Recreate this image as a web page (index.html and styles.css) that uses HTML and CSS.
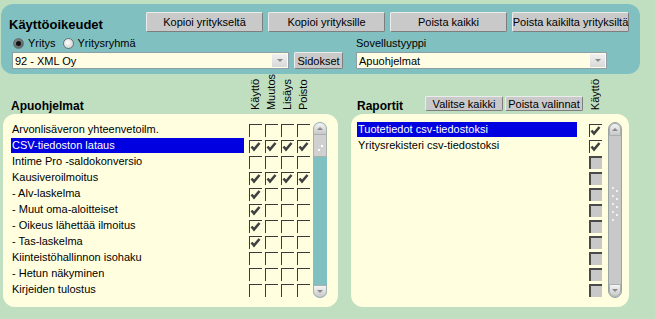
FILE: index.html
```html
<!DOCTYPE html>
<html>
<head>
<meta charset="utf-8">
<title>Käyttöoikeudet</title>
<link rel="stylesheet" href="styles.css">
</head>
<body>
<div class="top">
  <div class="row1">
    <div class="title">Käyttöoikeudet</div>
    <div class="btns">
      <div class="btn tb">Kopioi yritykseltä</div>
      <div class="btn tb">Kopioi yrityksille</div>
      <div class="btn tb">Poista kaikki</div>
      <div class="btn tb">Poista kaikilta yrityksiltä</div>
    </div>
  </div>
  <div class="grid">
    <div class="radios">
      <span class="radio"><span class="rb on"></span>Yritys</span>
      <span class="radio"><span class="rb"></span>Yritysryhmä</span>
    </div>
    <div class="lbl">Sovellustyyppi</div>
    <div class="select"><span class="val">92 - XML Oy</span><span class="arrow"><span class="tri-down"></span></span></div>
    <div class="btn sid">Sidokset</div>
    <div class="select s2"><span class="val">Apuohjelmat</span><span class="arrow"><span class="tri-down"></span></span></div>
  </div>
</div>

<div class="lower">
  <div class="col left">
    <div class="head">
      <div class="htitle">Apuohjelmat</div>
      <div class="vlabels">
        <span class="vl">Käyttö</span>
        <span class="vl">Muutos</span>
        <span class="vl">Lisäys</span>
        <span class="vl">Poisto</span>
      </div>
    </div>
    <div class="panel">
      <div class="list">
        <div class="row"><div class="name">Arvonlisäveron yhteenvetoilm.</div><span class="cell"><span class="cb"></span></span><span class="cell"><span class="cb"></span></span><span class="cell"><span class="cb"></span></span><span class="cell"><span class="cb"></span></span></div>
        <div class="row"><div class="name sel">CSV-tiedoston lataus</div><span class="cell"><span class="cb"><svg class="ck" viewBox="0 0 11 11"><path d="M1.5 5.5 L4 8.5 L9.5 2"/></svg></span></span><span class="cell"><span class="cb"><svg class="ck" viewBox="0 0 11 11"><path d="M1.5 5.5 L4 8.5 L9.5 2"/></svg></span></span><span class="cell"><span class="cb"><svg class="ck" viewBox="0 0 11 11"><path d="M1.5 5.5 L4 8.5 L9.5 2"/></svg></span></span><span class="cell"><span class="cb"><svg class="ck" viewBox="0 0 11 11"><path d="M1.5 5.5 L4 8.5 L9.5 2"/></svg></span></span></div>
        <div class="row"><div class="name">Intime Pro -saldokonversio</div><span class="cell"><span class="cb"></span></span><span class="cell"><span class="cb"></span></span><span class="cell"><span class="cb"></span></span><span class="cell"><span class="cb"></span></span></div>
        <div class="row"><div class="name">Kausiveroilmoitus</div><span class="cell"><span class="cb"><svg class="ck" viewBox="0 0 11 11"><path d="M1.5 5.5 L4 8.5 L9.5 2"/></svg></span></span><span class="cell"><span class="cb"><svg class="ck" viewBox="0 0 11 11"><path d="M1.5 5.5 L4 8.5 L9.5 2"/></svg></span></span><span class="cell"><span class="cb"><svg class="ck" viewBox="0 0 11 11"><path d="M1.5 5.5 L4 8.5 L9.5 2"/></svg></span></span><span class="cell"><span class="cb"><svg class="ck" viewBox="0 0 11 11"><path d="M1.5 5.5 L4 8.5 L9.5 2"/></svg></span></span></div>
        <div class="row"><div class="name">- Alv-laskelma</div><span class="cell"><span class="cb"><svg class="ck" viewBox="0 0 11 11"><path d="M1.5 5.5 L4 8.5 L9.5 2"/></svg></span></span><span class="cell"><span class="cb"></span></span><span class="cell"><span class="cb"></span></span><span class="cell"><span class="cb"></span></span></div>
        <div class="row"><div class="name">- Muut oma-aloitteiset</div><span class="cell"><span class="cb"><svg class="ck" viewBox="0 0 11 11"><path d="M1.5 5.5 L4 8.5 L9.5 2"/></svg></span></span><span class="cell"><span class="cb"></span></span><span class="cell"><span class="cb"></span></span><span class="cell"><span class="cb"></span></span></div>
        <div class="row"><div class="name">- Oikeus lähettää ilmoitus</div><span class="cell"><span class="cb"><svg class="ck" viewBox="0 0 11 11"><path d="M1.5 5.5 L4 8.5 L9.5 2"/></svg></span></span><span class="cell"><span class="cb"></span></span><span class="cell"><span class="cb"></span></span><span class="cell"><span class="cb"></span></span></div>
        <div class="row"><div class="name">- Tas-laskelma</div><span class="cell"><span class="cb"><svg class="ck" viewBox="0 0 11 11"><path d="M1.5 5.5 L4 8.5 L9.5 2"/></svg></span></span><span class="cell"><span class="cb"></span></span><span class="cell"><span class="cb"></span></span><span class="cell"><span class="cb"></span></span></div>
        <div class="row"><div class="name">Kiinteistöhallinnon isohaku</div><span class="cell"><span class="cb"></span></span><span class="cell"><span class="cb"></span></span><span class="cell"><span class="cb"></span></span><span class="cell"><span class="cb"></span></span></div>
        <div class="row"><div class="name">- Hetun näkyminen</div><span class="cell"><span class="cb"></span></span><span class="cell"><span class="cb"></span></span><span class="cell"><span class="cb"></span></span><span class="cell"><span class="cb"></span></span></div>
        <div class="row"><div class="name">Kirjeiden tulostus</div><span class="cell"><span class="cb"></span></span><span class="cell"><span class="cb"></span></span><span class="cell"><span class="cb"></span></span><span class="cell"><span class="cb"></span></span></div>
      </div>
      <div class="sb teal">
        <div class="cap up"><span class="tri-up"></span></div>
        <div class="thumb"><span class="dot"></span><span class="dot d2"></span></div>
        <div class="cap down"><span class="tri-down"></span></div>
      </div>
    </div>
  </div>

  <div class="col right">
    <div class="head">
      <div class="htitle rt">Raportit</div>
      <div class="hbtns">
        <div class="btn sm">Valitse kaikki</div>
        <div class="btn sm">Poista valinnat</div>
      </div>
      <div class="vlabels">
        <span class="vl">Käyttö</span>
      </div>
    </div>
    <div class="panel rp">
      <div class="list">
        <div class="row"><div class="name rn sel">Tuotetiedot csv-tiedostoksi</div><span class="cell"><span class="cb"><svg class="ck" viewBox="0 0 11 11"><path d="M1.5 5.5 L4 8.5 L9.5 2"/></svg></span></span></div>
        <div class="row"><div class="name rn">Yritysrekisteri csv-tiedostoksi</div><span class="cell"><span class="cb"><svg class="ck" viewBox="0 0 11 11"><path d="M1.5 5.5 L4 8.5 L9.5 2"/></svg></span></span></div>
        <div class="row"><div class="name rn"></div><span class="cell"><span class="cb dis"></span></span></div>
        <div class="row"><div class="name rn"></div><span class="cell"><span class="cb dis"></span></span></div>
        <div class="row"><div class="name rn"></div><span class="cell"><span class="cb dis"></span></span></div>
        <div class="row"><div class="name rn"></div><span class="cell"><span class="cb dis"></span></span></div>
        <div class="row"><div class="name rn"></div><span class="cell"><span class="cb dis"></span></span></div>
        <div class="row"><div class="name rn"></div><span class="cell"><span class="cb dis"></span></span></div>
        <div class="row"><div class="name rn"></div><span class="cell"><span class="cb dis"></span></span></div>
        <div class="row"><div class="name rn"></div><span class="cell"><span class="cb dis"></span></span></div>
        <div class="row"><div class="name rn"></div><span class="cell"><span class="cb dis"></span></span></div>
      </div>
      <div class="sb gray">
        <div class="cap up"><span class="tri-up"></span></div>
        <div class="track">
          <svg class="grip" width="8" height="36" viewBox="0 0 8 36">
            <circle cx="2" cy="2" r="1" fill="#fff"/><circle cx="6" cy="5" r="1" fill="#fff"/>
            <circle cx="2" cy="10" r="1" fill="#fff"/><circle cx="6" cy="13" r="1" fill="#fff"/>
            <circle cx="2" cy="18" r="1" fill="#fff"/><circle cx="6" cy="21" r="1" fill="#fff"/>
            <circle cx="2" cy="26" r="1" fill="#fff"/><circle cx="6" cy="29" r="1" fill="#fff"/>
            <circle cx="2" cy="34" r="1" fill="#fff"/>
          </svg>
        </div>
        <div class="cap down"><span class="tri-down"></span></div>
      </div>
    </div>
  </div>
</div>
</body>
</html>
```

FILE: styles.css
```css
* { box-sizing: border-box; }
html, body { margin: 0; padding: 0; }
body {
  background: #c0dfc0;
  font-family: "Liberation Sans", Arial, sans-serif;
  font-size: 11px;
  color: #000;
  width: 655px;
  height: 319px;
  overflow: hidden;
}

/* top panel */
.top {
  margin: 4px 15px 0 1px;
  height: 70px;
  background: #80c0c0;
  border-radius: 12px;
  padding: 8px 0 0 8px;
}
.row1 { display: flex; height: 20px; align-items: center; }
.title { width: 137px; font-size: 13px; font-weight: bold; padding-top: 5px; }
.btns { display: flex; gap: 5px; }
.btn {
  display: flex;
  align-items: center;
  justify-content: center;
  background: #c9c9c9;
  border: 1px solid;
  border-color: #ececec #7e7e7e #7e7e7e #ececec;
  border-radius: 2px;
  white-space: nowrap;
}
.tb { width: 117px; height: 20px; }

.grid {
  display: grid;
  grid-template-columns: 277px 49px 3px 251px;
  grid-template-rows: 16px 17px;
  column-gap: 5px;
  row-gap: 1px;
  margin: 3px 0 0 3px;
}
.radios { grid-column: 1 / 3; display: flex; align-items: center; gap: 7px; padding-left: 1px; }
.radio { display: flex; align-items: center; gap: 4px; }
.rb {
  width: 11px; height: 11px; border-radius: 50%;
  border: 1px solid #6a7070;
  background: radial-gradient(circle at 40% 40%, #ffffff, #c4c8c8);
  display: flex; align-items: center; justify-content: center;
}
.rb.on { background: radial-gradient(circle at 40% 40%, #8a9090, #505858); }
.rb.on::after { content: ""; width: 5px; height: 5px; border-radius: 50%; background: #101010; }
.lbl { grid-column: 4; align-self: center; }
.select {
  grid-row: 2;
  display: flex;
  align-items: center;
  background: #fffee4;
  border: 1px solid #8e9ea6;
  height: 17px;
  padding-left: 2px;
}
.select .val { flex: 1; }
.select.s2 { grid-column: 4; }
.arrow {
  width: 15px; height: 13px; margin-right: 1px;
  background: linear-gradient(#f0f0f0, #d8d8d8);
  display: flex; align-items: center; justify-content: center;
}
.sid { grid-row: 2; grid-column: 2; height: 17px; }

.tri-down { width: 0; height: 0; border-left: 3px solid transparent; border-right: 3px solid transparent; border-top: 3px solid #8a8a8a; }
.tri-up { width: 0; height: 0; border-left: 3px solid transparent; border-right: 3px solid transparent; border-bottom: 3px solid #8a8a8a; }

/* lower */
.lower { display: flex; gap: 13px; padding-left: 3px; }
.col.left { width: 335px; }
.col.right { width: 278px; }
.head { height: 40px; display: flex; align-items: flex-end; }
.htitle { width: 244px; padding-left: 8px; font-size: 12px; font-weight: bold; line-height: 14px; margin-bottom: 1px; }
.htitle.rt { width: 74px; padding-left: 6px; }
.vlabels { display: flex; margin-bottom: 4px; }
.vl {
  width: 16px;
  writing-mode: vertical-rl;
  transform: rotate(180deg);
  line-height: 16px;
  white-space: nowrap;
}
.hbtns { display: flex; gap: 2px; margin-bottom: 3px; margin-right: 4px; }
.sm { width: 78px; height: 15px; }

.panel {
  height: 193px;
  background: #ffffe0;
  border-radius: 12px;
  padding: 8px 11px 0 8px;
  display: flex;
  align-items: flex-start;
}
.panel.rp { padding: 8px 7px 0 6px; }
.list { display: flex; flex-direction: column; }
.row { display: flex; height: 16px; }
.name { width: 233px; height: 15px; line-height: 15px; padding-left: 1px; margin-right: 3px; white-space: nowrap; }
.name.rn { width: 220px; margin-right: 10px; }
.name.sel { background: #0000e0; color: #fff; }
.cell { width: 16px; padding: 2px 0 0 2px; }
.cb {
  display: block;
  width: 13px; height: 13px;
  border-top: 1px solid #3a3a3a;
  border-left: 1px solid #3a3a3a;
}
.ck { display: block; width: 11px; height: 11px; }
.ck path { fill: none; stroke: #404040; stroke-width: 2.6; }
.cb.dis { background: #c8c8c8; border-top: 2px solid #4a4a4a; border-left: 2px solid #4a4a4a; }

/* scrollbars */
.sb {
  width: 14px; height: 176px;
  margin-left: 2px;
  border-radius: 7px;
  display: flex; flex-direction: column;
  overflow: hidden;
}
.panel.rp .sb { margin-left: 5px; }
.sb.teal { background: #80c0c0; }
.sb.gray { background: #c8c8c8; border: 1px solid #9aa4a4; }
.cap {
  height: 13px;
  background: linear-gradient(#f4f4f4, #c8c8c8);
  border: 1px solid #a8b0b0;
  display: flex; align-items: center; justify-content: center;
}
.cap.up { border-radius: 7px 7px 0 0; }
.cap.down { border-radius: 0 0 7px 7px; margin-top: auto; }
.thumb { height: 22px; background: #d0d0d0; border: 1px solid #a8b0b0; border-top: 0; position: relative; }
.dot { position: absolute; width: 2px; height: 2px; background: #fff; left: 7px; top: 10px; }
.dot.d2 { left: 4px; top: 14px; }
.track { flex: 1; display: flex; align-items: center; justify-content: center; padding-bottom: 13px; }
```
